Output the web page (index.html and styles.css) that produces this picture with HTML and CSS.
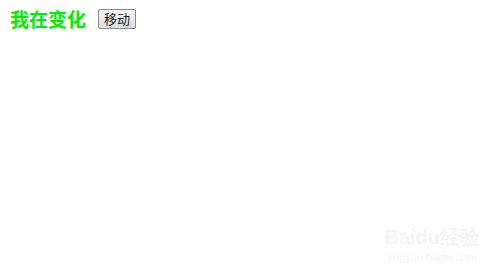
FILE: index.html
```html
<!DOCTYPE html>
<html lang="zh">
  <head>
    <meta charset="UTF-8" />
    <title>移动</title>
    <link rel="stylesheet" href="styles.css">
  </head>
  <body>
    <div class="row">
      <span class="change-text">我在变化</span>
      <button class="move-btn">移动</button>
    </div>
    <div class="watermark">
      <div class="wm-logo">Bai<span class="wm-paw">du</span>经验</div>
      <div class="wm-url">jingyan.baidu.com</div>
    </div>
  </body>
</html>
```

FILE: styles.css
```css
body {
  margin: 0;
  padding: 0;
  width: 500px;
  height: 277px;
  background: #ffffff;
  font-family: "Noto Sans CJK SC", sans-serif;
  position: relative;
  overflow: hidden;
}
.row {
  display: flex;
  align-items: center;
  padding: 7px 0 0 10px;
}
.change-text {
  color: #00ee00;
  font-size: 19px;
  font-weight: bold;
  line-height: 24px;
}
.move-btn {
  margin-left: 12px;
  height: 20px;
  padding: 0 5px;
  font-size: 13px;
  font-weight: normal;
  font-family: "Noto Sans CJK SC", sans-serif;
  line-height: 16px;
  border: 1px solid #8a8a8a;
  border-radius: 2px;
  background: linear-gradient(#f6f6f6, #dddddd);
  color: #222;
}
.watermark {
  position: absolute;
  right: 20px;
  bottom: 14px;
  color: #f4f4f4;
  text-align: center;
  font-family: "Liberation Sans", sans-serif;
}
.wm-logo {
  font-size: 20px;
  font-weight: bold;
}
.wm-url {
  font-size: 11px;
}
```
